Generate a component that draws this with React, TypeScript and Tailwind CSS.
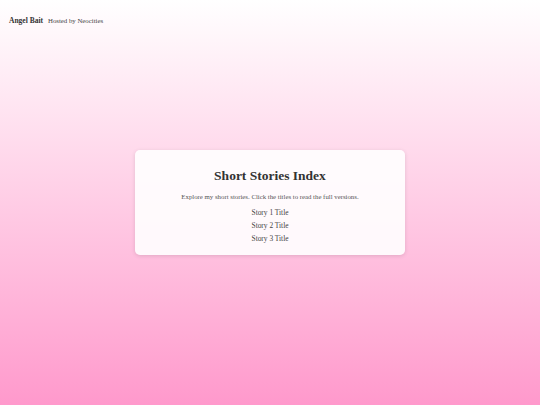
export default function App() {
  const stories = ["Story 1 Title", "Story 2 Title", "Story 3 Title"]

  return (
    <div
      className="relative flex h-[405px] w-full items-center justify-center bg-gradient-to-b from-[#ffffff] to-[#ff99cc] text-[#333]"
      style={{ fontFamily: '"Liberation Serif", "Times New Roman", serif' }}
    >
      {/* Top bar */}
      <div className="absolute left-[9px] top-[15px] flex items-baseline gap-[5px]">
        <span className="text-[7.5px] font-bold text-[#333]">Angel Bait</span>
        <span className="text-[6.8px] text-[#444]">Hosted by Neocities</span>
      </div>

      {/* Index card */}
      <div className="flex w-[270px] flex-col items-center rounded-[5px] bg-white/90 px-4 pb-[11px] pt-[16px] shadow-[0_1px_4px_rgba(0,0,0,0.12)]">
        <h1 className="text-[13.5px] font-bold leading-[20px] text-[#333]">Short Stories Index</h1>
        <p className="mt-[6px] text-[6.8px] text-[#555]">
          Explore my short stories. Click the titles to read the full versions.
        </p>
        <ul className="mt-[4px] flex flex-col items-center gap-[2px]">
          {stories.map((s) => (
            <li key={s} className="text-[7.4px] leading-[11px] text-[#444]">
              {s}
            </li>
          ))}
        </ul>
      </div>
    </div>
  )
}
